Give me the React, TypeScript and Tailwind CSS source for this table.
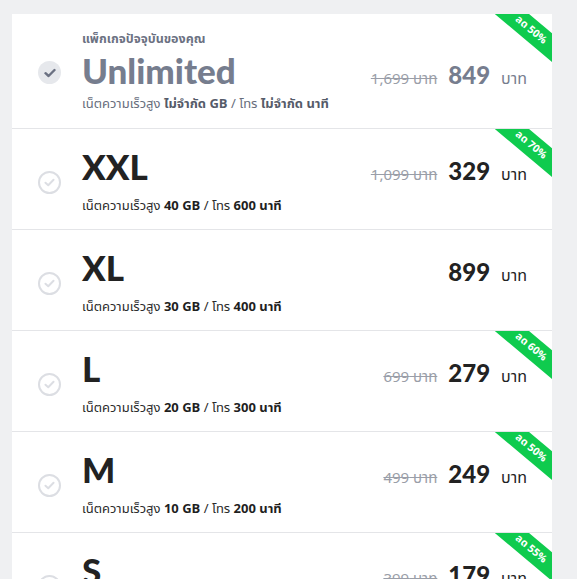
import React from 'react';

type Plan = {
  name: string;
  gb: string;
  mins: string;
  price: string;
  oldPrice?: string;
  discount?: string;
  current?: boolean;
};

const PLANS: Plan[] = [
  { name: 'Unlimited', gb: 'ไม่จำกัด GB', mins: 'ไม่จำกัด นาที', price: '849', oldPrice: '1,699', discount: '50%', current: true },
  { name: 'XXL', gb: '40 GB', mins: '600 นาที', price: '329', oldPrice: '1,099', discount: '70%' },
  { name: 'XL', gb: '30 GB', mins: '400 นาที', price: '899' },
  { name: 'L', gb: '20 GB', mins: '300 นาที', price: '279', oldPrice: '699', discount: '60%' },
  { name: 'M', gb: '10 GB', mins: '200 นาที', price: '249', oldPrice: '499', discount: '50%' },
  { name: 'S', gb: '5 GB', mins: '100 นาที', price: '179', oldPrice: '399', discount: '55%' },
];

function CheckCircle({ active }: { active?: boolean }) {
  if (active) {
    return (
      <div className="w-[23px] h-[23px] rounded-full bg-[#e6e8ec] flex items-center justify-center shrink-0">
        <svg width="12" height="10" viewBox="0 0 12 10" fill="none">
          <path d="M1.5 5.2 L4.6 8 L10.5 2" stroke="#6b7182" strokeWidth="2.4" strokeLinecap="round" strokeLinejoin="round" />
        </svg>
      </div>
    );
  }
  return (
    <div className="w-[23px] h-[23px] rounded-full border-2 border-[#dcdee3] flex items-center justify-center shrink-0">
      <svg width="11" height="9" viewBox="0 0 12 10" fill="none">
        <path d="M1.5 5.2 L4.6 8 L10.5 2" stroke="#dcdee3" strokeWidth="2.2" strokeLinecap="round" strokeLinejoin="round" />
      </svg>
    </div>
  );
}

// green corner badge, clipped by the row
function Ribbon({ text }: { text: string }) {
  return (
    <div className="absolute top-[5px] right-[-31px] w-[104px] h-[22px] bg-[#0fcb4e] rotate-[40deg] flex items-center justify-center">
      <span className="text-white text-[10.5px] font-bold leading-none">ลด {text}</span>
    </div>
  );
}

function PlanRow({ plan }: { plan: Plan }) {
  const cur = plan.current;
  const tone = cur ? 'text-[#767d8e]' : 'text-[#222222]';
  return (
    <div className={`relative overflow-hidden flex items-center pl-[26px] pr-[25px] border-b border-[#e4e5e8] ${cur ? 'pt-[17px] pb-[14px]' : 'pt-[20px] pb-[13px]'}`}>
      {plan.discount && <Ribbon text={plan.discount} />}
      <CheckCircle active={cur} />
      <div className="flex-1 ml-[21px]">
        {cur && (
          <div className="text-[12.5px] leading-[18px] font-bold text-[#6b7182] mb-[4px]">แพ็กเกจปัจจุบันของคุณ</div>
        )}
        <div className="flex items-baseline justify-between">
          <div className={`font-['Lato'] font-black text-[35px] leading-[35px] ${tone}`}>{plan.name}</div>
          <div className="flex items-baseline leading-none">
            {plan.oldPrice && (
              <span className="text-[15px] text-[#9a9ea8] line-through mr-[11px]">{plan.oldPrice} บาท</span>
            )}
            <span className={`font-['Lato'] font-black text-[24px] ${tone}`}>{plan.price}</span>
            <span className={`text-[16px] ml-[11px] ${tone}`}>บาท</span>
          </div>
        </div>
        <div className={`text-[13px] leading-[19px] ${cur ? 'mt-[7px] text-[#676d7c]' : 'mt-[13px] text-[#2a2a2a]'}`}>
          เน็ตความเร็วสูง <b className={cur ? 'text-[#555b69]' : 'text-[#1f1f1f]'}>{plan.gb}</b> / โทร{' '}
          <b className={cur ? 'text-[#555b69]' : 'text-[#1f1f1f]'}>{plan.mins}</b>
        </div>
      </div>
    </div>
  );
}

export default function App() {
  return (
    <div className="h-screen overflow-hidden bg-[#eff0f2] pt-[14px] pl-[12px] pr-[25px] font-['Noto_Sans_Thai','Noto_Sans',Lato,sans-serif]">
      <div className="bg-white">
        {PLANS.map((p) => (
          <PlanRow key={p.name} plan={p} />
        ))}
      </div>
    </div>
  );
}
